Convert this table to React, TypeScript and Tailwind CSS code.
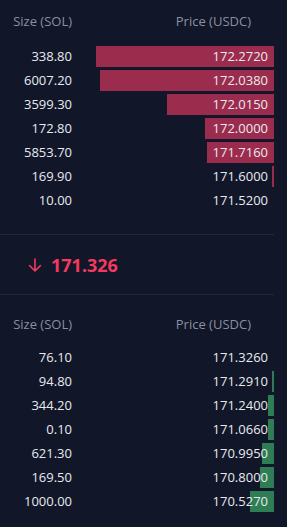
import React from "react";

const asks = [
  { size: "338.80", price: "172.2720", w: 178 },
  { size: "6007.20", price: "172.0380", w: 174 },
  { size: "3599.30", price: "172.0150", w: 107 },
  { size: "172.80", price: "172.0000", w: 69 },
  { size: "5853.70", price: "171.7160", w: 67 },
  { size: "169.90", price: "171.6000", w: 2 },
  { size: "10.00", price: "171.5200", w: 0 },
];

const bids = [
  { size: "76.10", price: "171.3260", w: 0 },
  { size: "94.80", price: "171.2910", w: 2 },
  { size: "344.20", price: "171.2400", w: 6 },
  { size: "0.10", price: "171.0660", w: 6 },
  { size: "621.30", price: "170.9950", w: 12 },
  { size: "169.50", price: "170.8000", w: 14 },
  { size: "1000.00", price: "170.5270", w: 24 },
];

function Header() {
  return (
    <div className="flex h-[20px] items-center pr-[13px] text-[13px] text-[#8b90a0]">
      <div className="w-[72px] text-right">Size (SOL)</div>
      <div className="flex-1 pr-[23px] text-right">Price (USDC)</div>
    </div>
  );
}

function Row({ size, price, w, color }: { size: string; price: string; w: number; color: string }) {
  return (
    <div className="flex h-[21px] items-center pr-[13px] text-[13px] text-[#e8eaf0]">
      <div className="w-[72px] text-right">{size}</div>
      <div className="relative flex h-full flex-1 items-center justify-end">
        {w > 0 && (
          <div className={`absolute right-0 top-0 h-full ${color}`} style={{ width: w }} />
        )}
        <span className="relative pr-[6px]">{price}</span>
      </div>
    </div>
  );
}

export default function App() {
  return (
    <div
      className="h-[527px] w-[287px] overflow-hidden bg-[#111628]"
      style={{ fontFamily: '"Open Sans", "Noto Sans", sans-serif' }}
    >
      <div className="pt-[12px]">
        <Header />
      </div>
      <div className="mt-[14px] flex flex-col gap-[3px]">
        {asks.map((r) => (
          <Row key={r.price} {...r} color="bg-[#9b2c4e]" />
        ))}
      </div>
      <div className="mt-[23px] mr-[13px] h-px bg-[#1f2747]" />
      <div className="flex h-[59px] items-center gap-[8px] pl-[27px]">
        <svg width="16" height="16" viewBox="0 0 16 16" fill="none" stroke="#f23a5e" strokeWidth="1.6" strokeLinecap="round" strokeLinejoin="round">
          <path d="M8 2v12M2.5 8.5L8 14l5.5-5.5" />
        </svg>
        <span className="text-[18px] font-bold leading-none text-[#f23a5e]">171.326</span>
      </div>
      <div className="mr-[13px] h-px bg-[#1f2747]" />
      <div className="pt-[20px]">
        <Header />
      </div>
      <div className="mt-[12px] flex flex-col gap-[3px]">
        {bids.map((r) => (
          <Row key={r.price} {...r} color="bg-[#2e7d55]" />
        ))}
      </div>
    </div>
  );
}
